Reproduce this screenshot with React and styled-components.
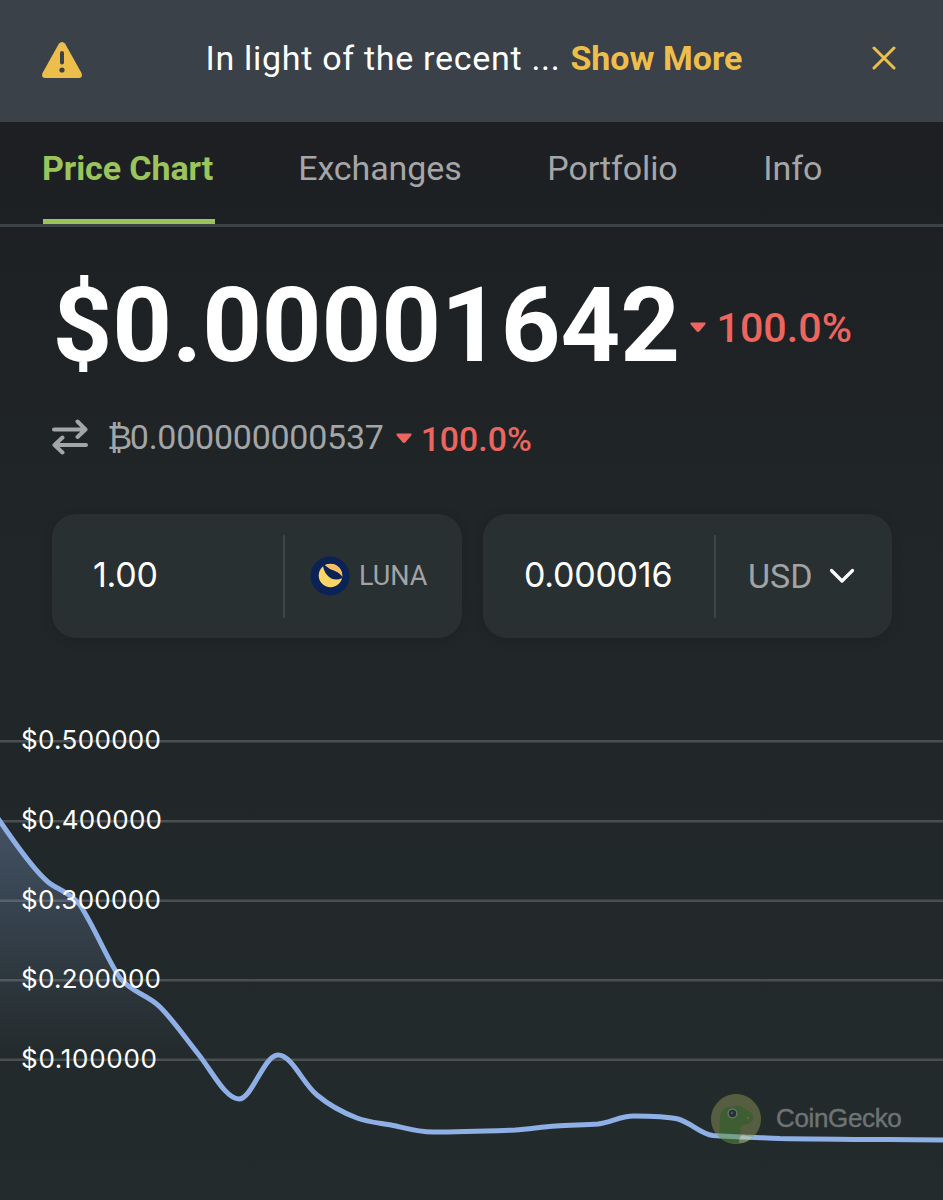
import React from 'react';
import styled, { createGlobalStyle } from 'styled-components';

const GlobalStyle = createGlobalStyle`
    *, *::before, *::after {
        box-sizing: border-box;
    }

    body {
        margin: 0;
        background: #212628;
    }
`;

const TABS = ['Price Chart', 'Exchanges', 'Portfolio', 'Info'];

const GRID = [
    { y: 61, label: '$0.500000', width: 140 },
    { y: 141, label: '$0.400000', width: 141 },
    { y: 220.5, label: '$0.300000', width: 140 },
    { y: 300, label: '$0.200000', width: 140 },
    { y: 379.5, label: '$0.100000', width: 136 },
];

const LINE =
    'M-3 137 C10 156 32 189 48 202 C58 210 70 212 80 225 C96 250 107 279 120 298 C132 313 147 314 160 327 ' +
    'C174 341 186 359 199 375 C213 393 226 419 239 419 C252 419 264 375 278 375 C292 375 303 404 317 415 ' +
    'C330 426 344 433 357 438 C370 443 383 443 396 446 C409 449 420 452 433 452 C460 452 488 451 515 450 ' +
    'C530 449 541 447 556 446 C570 445 585 445 598 444 C612 442 620 436 634 436 C650 436 664 436 678 439 ' +
    'C692 443 700 454 713 455.5 C735 457 760 457.500 780 458.500 C830 459.500 890 459.500 946 460';

const Change = ({ large, children }) => (
    <ChangeWrapper $large={large}>
        <svg width="16" height="11" viewBox="0 0 16 11">
            <path d="M1.300 0.500 H14.700 Q16.500 1 15 2.800 L9.500 9.300 Q8 10.800 6.500 9.300 L1 2.800 Q-0.500 1 1.300 0.500 Z" fill="#ec655f" />
        </svg>
        <ChangeValue>{children}</ChangeValue>
    </ChangeWrapper>
);

const LunaLogo = () => (
    <svg width="40" height="40" viewBox="0 0 40 40">
        <circle cx="20" cy="20" r="19.500" fill="#0b2256" />
        <path d="M30 30 A14.500 14.500 0 0 0 34 15 Q36 27 27 33 Z" fill="#0d3180" />
        <circle cx="20.500" cy="19.500" r="11.800" fill="#fbd567" />
        <path d="M24 8.500 A11.800 11.800 0 0 1 32 21 Q28 14 20 12 Q17 10 17 8.200 Z" fill="#f7bd62" />
        <path d="M13 10 Q13 7 16 10 Q19 13 24 14.500 Q31 17 32.500 22 Q24 26 18 20 Q14 16 13 10 Z" fill="#0b2256" />
    </svg>
);

const Gecko = () => (
    <svg width="52" height="52" viewBox="0 0 52 52">
        <circle cx="26" cy="26" r="24.500" fill="#8b9155" stroke="#7ba03f" strokeWidth="1" />
        <path d="M8.500 43 C11 36 8 25 12 18 C15 13 20 14 23 14 C25 12 30 12 33 15 C37 17 42 19 43 23 C44 28 40 31 34 32 C31 33 30 35 31 38 C30 43 28 46 29 50 C21 51 13 48 8.500 43 Z" fill="#5a9135" />
        <path d="M29 50 C29 43 33 41 36 43 L43 44 C39 48 34 50.500 29 50 Z" fill="#c5d68d" />
        <circle cx="22.500" cy="20.500" r="5" fill="#b3c1bd" />
        <circle cx="22.500" cy="20.500" r="3.700" fill="#27343c" />
        <circle cx="22" cy="20" r="1.400" fill="#6f7f82" />
        <circle cx="38" cy="25" r="1.200" fill="#8baa63" />
    </svg>
);

const App = () => {
    return (<Wrapper>
        <GlobalStyle />
        <Banner>
            <svg width="42" height="38" viewBox="0 0 42 38">
                <path d="M18 2.500 Q21 -0.500 24 2.500 L40.500 32 Q42 36.500 38 37 H4 Q0 36.500 1.500 32 Z" fill="#edbe4b" />
                <path d="M21 12 V21.500" stroke="#3b4148" strokeWidth="4" strokeLinecap="round" />
                <circle cx="21" cy="29" r="2.600" fill="#3b4148" />
            </svg>
            <BannerText>
                <Notice>In light of the recent ...</Notice>
                <ShowMore>Show More</ShowMore>
            </BannerText>
            <svg width="24" height="24" viewBox="0 0 24 24">
                <path d="M2 2 L22 22 M22 2 L2 22" stroke="#edbe4b" strokeWidth="3" strokeLinecap="round" />
            </svg>
        </Banner>

        <Tabs>
            {TABS.map((tab, i) => (
                <Tab key={tab} $active={i === 0}>{tab}</Tab>
            ))}
        </Tabs>

        <PriceRow>
            <Price>$0.00001642</Price>
            <Change large>100.0%</Change>
        </PriceRow>

        <BtcRow>
            <svg width="36" height="36" viewBox="0 0 36 36" fill="none" stroke="#a3a5a7" strokeWidth="4" strokeLinecap="round" strokeLinejoin="round">
                <path d="M2 10.500 H33 M25.500 2.500 L33.500 10.500 L25.500 18" />
                <path d="M34 26 H3 M10.500 18.500 L2.500 26 L10.500 33.500" />
            </svg>
            <BtcPrice><BtcSign>₿</BtcSign>0.000000000537</BtcPrice>
            <Change>100.0%</Change>
        </BtcRow>

        <Converter>
            <Box $width={410}>
                <Amount>1.00</Amount>
                <Currency $gap={9} $left={25}>
                    <LunaLogo />
                    <Symbol $size={27}>LUNA</Symbol>
                </Currency>
            </Box>
            <Box $width={409}>
                <Amount>0.000016</Amount>
                <Currency $gap={16} $left={32}>
                    <Symbol $size={34}>USD</Symbol>
                    <svg width="26" height="16" viewBox="0 0 26 16">
                        <path d="M2.500 2.500 L13 13 L23.500 2.500" fill="none" stroke="#fff" strokeWidth="3.200" strokeLinecap="round" strokeLinejoin="round" />
                    </svg>
                </Currency>
            </Box>
        </Converter>

        <Chart>
            <svg width="943" height="520" viewBox="0 0 943 520">
                <defs>
                    <linearGradient id="area" gradientUnits="userSpaceOnUse" x1="0" y1="137" x2="0" y2="380">
                        <stop offset="0" stopColor="#8fb0e8" stopOpacity="0.310" />
                        <stop offset="1" stopColor="#8fb0e8" stopOpacity="0" />
                    </linearGradient>
                </defs>
                {GRID.map(({ y }) => (
                    <path key={y} d={`M0 ${y + 0.3} H943`} stroke="#4a4f51" strokeWidth="2.600" />
                ))}
                <path d={`${LINE} V520 H-3 Z`} fill="url(#area)" />
                <path d={LINE} fill="none" stroke="#8fb0e6" strokeWidth="5" />
                {GRID.map(({ y, label, width }) => (
                    <AxisLabel key={label} x="21" y={y + 8} textLength={width}>{label}</AxisLabel>
                ))}
            </svg>
            <Watermark>
                <Gecko />
                <span>CoinGecko</span>
            </Watermark>
        </Chart>
    </Wrapper>);
}


const Wrapper = styled.div`
    display: flex;
    flex-direction: column;
    width: 943px;
    height: 1200px;
    overflow: hidden;
    background: linear-gradient(#1d1f22 122px, #202527 500px, #232b2c 1200px);
    font-family: Roboto, sans-serif;
    white-space: nowrap;

    svg {
        display: block;
        flex-shrink: 0;
    }
`

const Banner = styled.div`
    display: flex;
    align-items: center;
    justify-content: space-between;
    height: 122px;
    flex-shrink: 0;
    padding: 0 47px 6px 41px;
    background: #3b4148;

    > svg:first-child {
        margin-top: 4px;
    }
`

const BannerText = styled.div`
    display: flex;
    gap: 10px;
    margin-right: 7px;
    color: #fff;
`

const Notice = styled.span`
    font-size: 34px;
    letter-spacing: 0.7px;
`

const ShowMore = styled.span`
    font-size: 34px;
    font-weight: 700;
    color: #edbe4b;
`

const Tabs = styled.div`
    display: flex;
    gap: 85.7px;
    height: 105px;
    flex-shrink: 0;
    padding: 0 43px;
    border-bottom: 3px solid #3b4145;
`

const Tab = styled.div`
    height: 102px;
    padding-top: 26px;
    font-size: 34px;
    line-height: 40px;
    letter-spacing: -0.1px;
    font-weight: ${({ $active }) => ($active ? 700 : 400)};
    color: ${({ $active }) => ($active ? '#9bc45c' : '#a5a6a8')};
    border-bottom: 5px solid ${({ $active }) => ($active ? '#9bc45c' : 'transparent')};

    &:first-child {
        width: 172px;
        margin-right: -2.5px;
        text-indent: -1px;
    }
`

const PriceRow = styled.div`
    display: flex;
    align-items: center;
    gap: 9.5px;
    height: 124px;
    margin-top: 36px;
    padding-left: 52.5px;
    flex-shrink: 0;
`

const Price = styled.div`
    font-size: 104.3px;
    line-height: 124px;
    font-weight: 700;
    letter-spacing: -0.1px;
    color: #fff;
`

const ChangeWrapper = styled.div`
    display: flex;
    align-items: center;
    gap: ${({ $large }) => ($large ? 11 : 9)}px;
    margin-top: ${({ $large }) => ($large ? 4 : 2)}px;
    font-size: ${({ $large }) => ($large ? 41.2 : 33.8)}px;
    font-weight: 500;
    color: #ec655f;
`

const ChangeValue = styled.span`
    padding-top: 2px;
`

const BtcRow = styled.div`
    display: flex;
    align-items: center;
    height: 44px;
    margin-top: 28px;
    padding-left: 52px;
    flex-shrink: 0;
`

const BtcPrice = styled.div`
    margin: 0 12px 0 19px;
    font-size: 34px;
    letter-spacing: -0.25px;
    color: #a3a5a7;
`

const BtcSign = styled.span`
    letter-spacing: -2.4px;
`

const Converter = styled.div`
    display: flex;
    gap: 21px;
    margin-top: 55px;
    padding-left: 52px;
    flex-shrink: 0;
`

const Box = styled.div`
    display: flex;
    align-items: center;
    width: ${({ $width }) => $width}px;
    height: 124px;
    padding-left: 41px;
    border-radius: 24px;
    background: #293032;
    box-shadow: 0 2px 12px rgba(0, 0, 0, 0.12);
`

const Amount = styled.div`
    width: 190px;
    padding-bottom: 3px;
    font-family: Inter, sans-serif;
    font-size: 34px;
    letter-spacing: -0.25px;
    color: #fff;
`

const Currency = styled.div`
    display: flex;
    align-items: center;
    gap: ${({ $gap }) => $gap}px;
    height: 83px;
    padding-left: ${({ $left }) => $left}px;
    border-left: 2px solid #3e4548;
    color: #a1a4a5;
`

const Symbol = styled.span`
    font-size: ${({ $size }) => $size}px;
`

const Chart = styled.div`
    position: relative;
    height: 520px;
    margin-top: 42px;
    flex-shrink: 0;
`

const AxisLabel = styled.text`
    font-family: Inter, sans-serif;
    font-size: 26px;
    fill: #fff;
`

const Watermark = styled.div`
    position: absolute;
    left: 710px;
    top: 413px;
    display: flex;
    align-items: center;
    gap: 14px;
    opacity: 0.5;
    font-family: "Liberation Sans", sans-serif;
    font-size: 26px;
    letter-spacing: -0.35px;
    color: #b8bcbe;

    span {
        padding-bottom: 2px;
        -webkit-text-stroke: 0.4px #b8bcbe;
    }
`

export default App;
